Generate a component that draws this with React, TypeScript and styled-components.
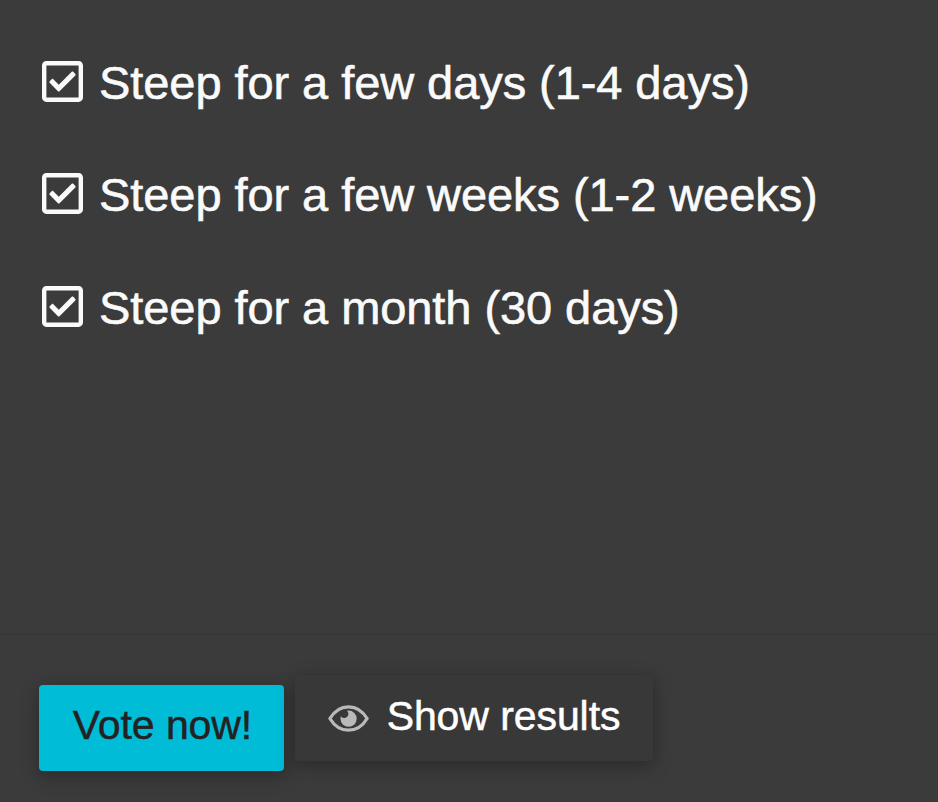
import styled, { createGlobalStyle } from "styled-components";
import { FaRegCheckSquare } from "react-icons/fa";

const GlobalStyle = createGlobalStyle`
  html, body { margin: 0; padding: 0; background: #3b3b3b; overflow: hidden; }
  * { box-sizing: border-box; }
`;

const Poll = styled.main`
  width: 938px;
  height: 802px;
  display: flex;
  flex-direction: column;
  background: #3b3b3b;
  border-bottom: 1px solid #403739;
  color: #fafafa;
  font-family: "Liberation Sans", Arial, sans-serif;
  overflow: hidden;
`;

const Options = styled.ul`
  list-style: none;
  margin: 0;
  padding: 26px 42px 0;
  height: 633px;
`;

const Option = styled.li`
  display: flex;
  align-items: center;
  height: 112.5px;
  font-size: 47px;
  line-height: 56px;
  white-space: nowrap;
`;

const CheckIcon = styled(FaRegCheckSquare)`
  width: 41px;
  height: 47px;
  flex: none;
  margin: 0 16px 2px 0;
`;

const OptionLabel = styled.span`
  padding-top: 1.2px;
  letter-spacing: -0.07px;
  -webkit-text-stroke: 0.6px currentColor;
`;

const Actions = styled.footer`
  display: flex;
  align-items: flex-start;
  height: 168px;
  padding: 40px 39px 0;
  border-top: 2px solid #383838;
`;

const Button = styled.button<{ $primary?: boolean }>`
  display: flex;
  align-items: center;
  justify-content: center;
  height: 86px;
  width: ${({ $primary }) => ($primary ? 245 : 358)}px;
  margin: ${({ $primary }) => ($primary ? "10px 11px 0 0" : "0")};
  padding: ${({ $primary }) => ($primary ? "0 0 6px 2px" : "0 0 4px")};
  border: 0;
  border-radius: 4px;
  background: ${({ $primary }) => ($primary ? "#00bcd7" : "#383838")};
  color: ${({ $primary }) => ($primary ? "#222" : "#fff")};
  font: 41px/50px "Liberation Sans", Arial, sans-serif;
  letter-spacing: -0.08px;
  -webkit-text-stroke: 0.5px currentColor;
  white-space: nowrap;
  box-shadow: 0 5px 20px rgba(0, 0, 0, 0.24), 0 2px 12px rgba(0, 0, 0, 0.08);
`;

const EyeSvg = styled.svg`
  width: 41px;
  height: 27px;
  margin: 5px 18px 0 0;
  flex: none;
  color: #b9b9b9;
`;

const EyeIcon = () => (
  <EyeSvg viewBox="0 0 41 27" fill="none" aria-hidden="true">
    <path
      d="M1.9 13.5C6.2 6.3 12.8 1.8 20.5 1.8S34.8 6.3 39.1 13.5C34.8 20.7 28.2 25.2 20.5 25.2S6.2 20.7 1.9 13.5Z"
      stroke="currentColor"
      strokeWidth="3.3"
      strokeLinejoin="round"
    />
    <circle cx="20.6" cy="13.7" r="8.1" fill="currentColor" />
    <circle cx="16.2" cy="8.9" r="4.2" fill="#383838" />
  </EyeSvg>
);

const options = [
  "Steep for a few days (1-4 days)",
  "Steep for a few weeks (1-2 weeks)",
  "Steep for a month (30 days)",
];

export default function App() {
  return (
    <>
      <GlobalStyle />
      <Poll>
        <Options>
          {options.map((label) => (
            <Option key={label}>
              <CheckIcon />
              <OptionLabel>{label}</OptionLabel>
            </Option>
          ))}
        </Options>
        <Actions>
          <Button $primary>Vote now!</Button>
          <Button>
            <EyeIcon />
            <span>Show results</span>
          </Button>
        </Actions>
      </Poll>
    </>
  );
}
